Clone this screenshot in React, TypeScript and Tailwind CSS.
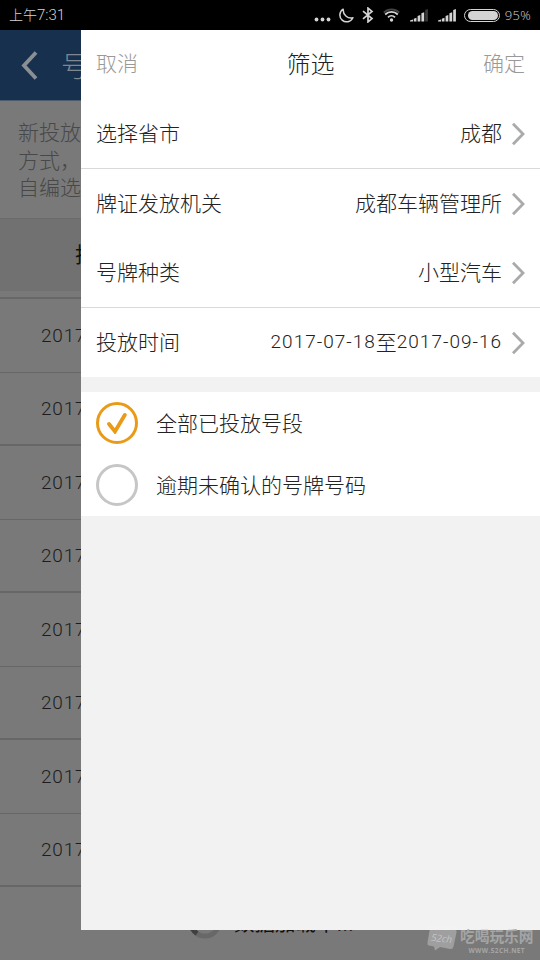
interface FilterRow {
  label: string;
  value: string;
  divider: boolean;
}

const rows: FilterRow[] = [
  { label: "选择省市", value: "成都", divider: true },
  { label: "牌证发放机关", value: "成都车辆管理所", divider: false },
  { label: "号牌种类", value: "小型汽车", divider: true },
];

const options = [
  { label: "全部已投放号段", checked: true },
  { label: "逾期未确认的号牌号码", checked: false },
];

const years = Array.from({ length: 8 }, () => "2017");

function Signal({ weak = false }: { weak?: boolean }) {
  return (
    <svg width="18" height="13" viewBox="0 0 18 13" fill="#d4d4d4">
      <path d="M0 12.5v-1l3-1v2zM3.8 9.8l2.7-1v3.7H3.8zM7.6 7l2.7-1v6.5H7.6zM11.4 4.2l2.8-1v9.3h-2.8z" />
      <path d="M15.2 1l2.7-1v12.5h-2.7z" fill={weak ? "#3a3a3a" : "#d4d4d4"} />
    </svg>
  );
}

function StatusBar() {
  return (
    <div className="flex h-[30px] items-center bg-black px-[9px] text-[#d4d4d4]">
      <span className="pb-px text-[14px] font-light leading-none">
        上午<span className="font-['Roboto',sans-serif] text-[15px]">7:31</span>
      </span>
      <div className="ml-auto flex items-center">
        <svg width="17" height="14" viewBox="0 0 17 14" fill="#d4d4d4">
          <circle cx="2.5" cy="11.5" r="1.9" />
          <circle cx="8.5" cy="11.5" r="1.9" />
          <circle cx="14.5" cy="11.5" r="1.9" />
        </svg>
        <svg className="ml-2" width="15" height="15" viewBox="0 0 15 15" fill="none" stroke="#d4d4d4" strokeWidth="1.5" strokeLinejoin="round">
          <path d="M4.2 1.2a6.8 6.8 0 1 0 9.7 8.6C8.5 11 3.8 6.5 4.2 1.2z" />
        </svg>
        <svg className="ml-2" width="12" height="16" viewBox="0 0 12 16" fill="none" stroke="#d4d4d4" strokeWidth="1.7">
          <path d="M1 4.2l9 7.4-4 3.3V1.1l4 3.3L1 11.8" />
        </svg>
        <svg className="ml-[9px]" width="17" height="14" viewBox="0 0 17 14" fill="none" stroke="#d4d4d4" strokeWidth="1.8">
          <path d="M.8 4.5a11 11 0 0 1 15.4 0" stroke="#444" />
          <path d="M2.2 6.5a9 9 0 0 1 12.6 0M5 9.3a5 5 0 0 1 7 0" />
          <circle cx="8.5" cy="12" r="1.7" fill="#d4d4d4" stroke="none" />
        </svg>
        <span className="ml-[10px]">
          <Signal weak />
        </span>
        <span className="ml-[10px]">
          <Signal />
        </span>
        <div className="ml-2 flex h-[13px] w-9 rounded-full border border-[#d4d4d4] p-px">
          <div className="ml-[2px] h-full w-[30px] rounded-full bg-[#d4d4d4]" />
        </div>
        <span className="ml-[5px] font-['Open_Sans',sans-serif] text-[13px] font-light leading-none tracking-[0.3px]">
          95%
        </span>
      </div>
    </div>
  );
}

function NumberPage() {
  return (
    <div className="flex flex-1 flex-col bg-[#797979] font-light">
      <header className="flex h-[71px] items-center border-b border-[#4d5b6b] bg-[#17304d] pl-[21px] text-[#7d8792]">
        <svg width="17" height="29" viewBox="0 0 17 29" fill="none" stroke="#8a8f95" strokeWidth="3.8">
          <path d="M15 1.5L3 14.5l12 13" />
        </svg>
        <span className="ml-[23px] text-[28px] leading-none">号</span>
      </header>
      <p className="h-[118px] border-b border-[#6b6b6b] pl-[18px] pt-[17px] text-[21px] leading-[27.5px] text-[#484848]">
        新投放
        <br />
        方式，
        <br />
        自编选
      </p>
      <div className="flex h-[72px] items-center bg-[#717171] pb-[2px] pl-[75px] text-[21px] font-normal text-[#111]">
        投
      </div>
      <div className="h-[8px] border-b-2 border-[#686868]" />
      {years.map((year, i) => (
        <div
          key={i}
          className={
            i % 2 === 0
              ? "flex h-[73.5px] items-center border-b border-[#676767] pl-[41px]"
              : "flex h-[73.5px] items-center border-b-2 border-[#676767] pl-[41px]"
          }
        >
          <span className="pt-[2px] font-['Roboto',sans-serif] text-[19px] tracking-[0.8px] text-[#1c1c1c]">{year}</span>
        </div>
      ))}
      <div className="flex items-center pl-[188px] pt-[10px] text-[20.5px] font-normal leading-[50px] text-[#111]">
        <svg className="mr-[12px]" width="34" height="34" viewBox="0 0 34 34" fill="none" strokeWidth="5">
          <circle cx="17" cy="17" r="14" stroke="#686868" />
          <path d="M3 17a14 14 0 0 0 6 11.5" stroke="#404040" />
        </svg>
        <span>数据加载中...</span>
      </div>
    </div>
  );
}

function Arrow() {
  return (
    <svg className="ml-[9px]" width="15" height="24" viewBox="0 0 15 24" fill="none" stroke="#aaa" strokeWidth="2.8">
      <path d="M2 1.8l10 10.2L2 22.2" />
    </svg>
  );
}

function FilterPanel() {
  return (
    <aside className="absolute left-[81px] right-0 top-[30px] flex h-[900px] flex-col bg-[#f2f2f2] text-[21px] font-light text-[#222]">
      <header className="flex h-[69px] items-center justify-between bg-white px-[15px] pb-[3px] text-[#999]">
        <span>取消</span>
        <span className="text-2xl text-[#222]">筛选</span>
        <span>确定</span>
      </header>
      <div className="bg-white">
        {rows.map((row) => (
          <div
            key={row.label}
            className={
              row.divider
                ? "flex h-[70px] items-center border-b border-[#d9d9d9] pl-[15px] pr-[14px]"
                : "flex h-[69px] items-center pl-[15px] pr-[14px]"
            }
          >
            <span className="pb-[2px]">{row.label}</span>
            <span className="ml-auto pb-[2px]">{row.value}</span>
            <Arrow />
          </div>
        ))}
        <div className="flex h-[69px] items-center pl-[15px] pr-[14px]">
          <span className="pb-[2px]">投放时间</span>
          <span className="ml-auto flex items-center">
            <span className="font-['Roboto',sans-serif] text-[19px] tracking-[1px]">2017-07-18</span>
            <span className="pb-[2px]">至</span>
            <span className="font-['Roboto',sans-serif] text-[19px] tracking-[1px]">2017-09-16</span>
          </span>
          <Arrow />
        </div>
      </div>
      <div className="mt-[15px] bg-white">
        {options.map((option) => (
          <div key={option.label} className="flex h-[62px] items-center pl-[15px]">
            <span
              className={
                option.checked
                  ? "flex h-[42px] w-[42px] items-center justify-center rounded-full border-[3px] border-[#e99b18]"
                  : "h-[42px] w-[42px] rounded-full border-[3px] border-[#c6c6c6]"
              }
            >
              {option.checked && (
                <svg width="20" height="21" viewBox="0 0 20 21" fill="none" stroke="#e99b18" strokeWidth="3.8" strokeLinecap="round">
                  <path d="M2 11l6 7.5L17.8 2" />
                </svg>
              )}
            </span>
            <span className="ml-[18px] pb-px">{option.label}</span>
          </div>
        ))}
      </div>
    </aside>
  );
}

function Watermark() {
  return (
    <div className="absolute left-[427px] top-[926px] flex items-start gap-[3px] text-[#a5a5a5]">
      <div className="relative flex h-[24px] w-[30px] items-center justify-center">
        <svg className="absolute inset-0" width="30" height="25" viewBox="0 0 30 25">
          <path
            d="M5 0l22 3q3 .5 2.5 3.5l-3 14q-.5 3-3.5 2.5l-10-2-5 3.5-1-4-5-1q-2-.5-1.500-3L3 2q.5-2 2-2z"
            fill="#9f9f9f"
          />
          <path d="M0 0h30v4H0z" fill="#f3f3f3" />
        </svg>
        <span className="relative rotate-6 font-['Open_Sans',sans-serif] text-[10px] italic leading-none text-[#c4c4c4]">
          52ch
        </span>
      </div>
      <div className="flex flex-col items-center pt-px font-bold leading-none">
        <span className="text-[14.7px] leading-[18px]">吃喝玩乐网</span>
        <span className="mt-[2px] font-['Open_Sans',sans-serif] text-[6.5px] leading-[7px] tracking-[0.4px]">
          WWW.52CH.NET
        </span>
      </div>
    </div>
  );
}

export default function App() {
  return (
    <main className="relative flex h-[960px] w-[540px] flex-col overflow-hidden font-['Noto_Sans_CJK_SC',sans-serif]">
      <StatusBar />
      <NumberPage />
      <FilterPanel />
      <Watermark />
    </main>
  );
}
